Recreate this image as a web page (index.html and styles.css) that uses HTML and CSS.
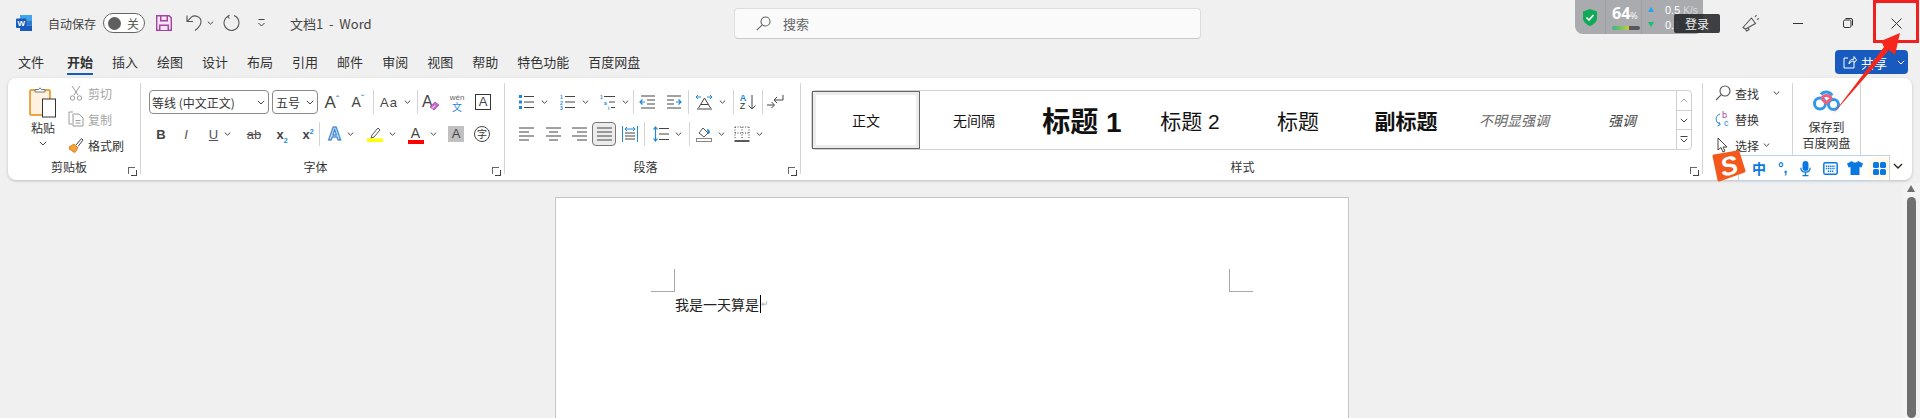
FILE: index.html
```html
<!DOCTYPE html>
<html lang="zh-CN">
<head>
  <meta charset="UTF-8">
  <title>文档1 - Word</title>
  <link rel="stylesheet" href="styles.css">
</head>
<body>
  <!-- title bar -->
  <header class="titlebar">
    <svg class="word-logo" width="16" height="16" viewBox="0 0 16 16">
      <rect x="4" y="0" width="12" height="5.4" fill="#41a5ee"/>
      <rect x="4" y="5.3" width="12" height="5.4" fill="#2b7cd3"/>
      <rect x="4" y="10.6" width="12" height="5.4" fill="#185abd"/>
      <rect x="0" y="3.5" width="10.5" height="9.5" rx="1" fill="#1a5bb8"/>
      <text x="5.2" y="11" class="word-w">W</text>
    </svg>
    <span class="autosave">自动保存</span>
    <div class="toggle"><i class="knob"></i><span>关</span></div>
    <svg class="save" width="16" height="16" viewBox="0 0 16 16">
      <path d="M.7.700h12.400l2.200 2.200v12.400H.7z" fill="#f4e6f4" stroke="#a544a5" stroke-width="1.400"/>
      <path d="M4 1h8v5.500H4zM3 9.500h10V15H3z" fill="#a544a5"/>
      <path d="M5.500 1.500h5v3.500h-5zM4.500 11h7v4h-7z" fill="#f4e6f4"/>
    </svg>
    <svg class="undo" width="16" height="18" viewBox="0 0 16 18" fill="none" stroke="#555" stroke-width="1.100">
      <path d="M1 1.500v6h6M1.200 7.300 5.600 2.900c3-2.200 9.400-.6 9.400 4.600 0 3.700-3 6.800-6 9"/>
    </svg>
    <svg class="chev undo-chev" width="7" height="4" viewBox="0 0 7 4"><path d="M.8.600 3.500 3.200 6.200.600"/></svg>
    <svg class="redo" width="17" height="18" viewBox="0 0 17 18" fill="none" stroke="#555" stroke-width="1.100">
      <path d="M11 1.500c3 1.200 5 4 5 7.500a7.500 7.500 0 1 1-11-6.700"/><path d="M6.500 1 4.800 2.500 6.500 4.500"/>
    </svg>
    <svg class="qat-more" width="9" height="8" viewBox="0 0 9 8" fill="none" stroke="#444"><path d="M1.500.5h6M1.500 4 4.500 7 7.500 4"/></svg>
    <span class="doc-title">文档1&nbsp; -&nbsp; Word</span>
    <div class="search">
      <svg width="15" height="15" viewBox="0 0 15 15" fill="none" stroke="#666" stroke-width="1.100"><circle cx="9.500" cy="5.500" r="4.500"/><path d="M6.200 8.800.8 14.200"/></svg>
      <span>搜索</span>
    </div>
    <div class="winctl">
      <svg class="megaphone" width="18" height="18" viewBox="0 0 18 18" fill="none" stroke="#555" stroke-width="1.100">
        <path d="M1 13.500 9.500 4l4 5.500-10 5.500zM3.500 15l1 2 2.500-1.200-.7-2.200M13 3l1.500-2M15 5.500l2-1"/>
      </svg>
      <i class="win-min"></i>
      <svg class="win-restore" width="10" height="10" viewBox="0 0 10 10" fill="none" stroke="#333"><rect x=".5" y="2" width="7.500" height="7.500" rx="1.500"/><path d="M2.500.5h5.500a1.500 1.500 0 0 1 1.500 1.500v5.500"/></svg>
      <svg class="win-close" width="11" height="11" viewBox="0 0 11 11" stroke="#333"><path d="M.5.500l10 10M10.500.500l-10 10"/></svg>
    </div>
  </header>

  <!-- tabs -->
  <nav class="tabs">
    <span>文件</span><span class="active">开始</span><span>插入</span><span>绘图</span><span>设计</span><span>布局</span><span>引用</span><span>邮件</span><span>审阅</span><span>视图</span><span>帮助</span><span>特色功能</span><span>百度网盘</span>
    <div class="share">
      <svg width="14" height="14" viewBox="0 0 14 14" fill="none" stroke="#fff"><path d="M5 3H1v10h10V8M6 9c0-3 2-5 5-5V1.500L13.500 5 11 8V6C9 6 7 7 6 9z"/></svg>
      <span>共享</span>
      <svg class="chev chev-white" width="8" height="5" viewBox="0 0 8 5"><path d="M.8.800 4 4 7.200.800"/></svg>
    </div>
  </nav>

  <!-- ribbon -->
  <section class="ribbon">
    <div class="group g-clip">
      <div class="group-body clip-body">
        <div class="paste">
          <svg width="28" height="31" viewBox="0 0 28 31">
            <rect x="1" y="3" width="20" height="25" rx="1" fill="#fdf2e0" stroke="#e8890c" stroke-width="1.500"/>
            <path d="M6 5V2.500h3.500L11 .8l1.500 1.700H16V5z" fill="#fff" stroke="#777"/>
            <rect x="13.500" y="12" width="13" height="18" fill="#fff" stroke="#333"/>
          </svg>
          <span>粘贴</span>
          <svg class="chev" width="8" height="5" viewBox="0 0 8 5"><path d="M.8.800 4 4 7.200.800"/></svg>
        </div>
        <div class="clip-list">
          <div class="clip-row off">
            <svg width="16" height="16" viewBox="0 0 14 16" fill="none" stroke="#9a9a9a"><path d="M3 1l6 9M11 1 5 10"/><circle cx="3.500" cy="13" r="2.200"/><circle cx="10.500" cy="13" r="2.200"/></svg>
            <span>剪切</span>
          </div>
          <div class="clip-row off">
            <svg width="16" height="16" viewBox="0 0 16 16" fill="none" stroke="#9a9a9a"><path d="M5 1H1v12h3"/><path d="M5 3h6l4 4v8H5zM7.500 9.500h5M7.500 12h5"/></svg>
            <span>复制</span>
          </div>
          <div class="clip-row">
            <svg width="16" height="16" viewBox="0 0 16 16"><path d="M1 10l5-3 4 4-3 4.500L4 14l-.5-1L2 13z" fill="#f6a33c" stroke="#d9730d" stroke-width=".8"/><path d="M8 8l5.500-6.500 1.500 1.500L10 9.500" fill="#fff" stroke="#444"/></svg>
            <span>格式刷</span>
          </div>
        </div>
      </div>
      <div class="group-label">剪贴板<i class="launcher"></i></div>
    </div>

    <div class="group g-font">
      <div class="group-body">
        <div class="row">
          <div class="combo combo-font"><span>等线 (中文正文)</span><svg class="chev" width="8" height="5" viewBox="0 0 8 5"><path d="M.8.800 4 4 7.200.800"/></svg></div>
          <div class="combo combo-size"><span>五号</span><svg class="chev" width="8" height="5" viewBox="0 0 8 5"><path d="M.8.800 4 4 7.200.800"/></svg></div>
          <div class="tool w26"><span class="glyph big-a">A<sup class="caret-blue">ˆ</sup></span></div>
          <div class="tool w26"><span class="glyph mid-a">A<sup class="caret-blue">ˇ</sup></span></div>
          <i class="sep s1"></i>
          <div class="tool w43"><span class="glyph aa">Aa</span><svg class="chev" width="7" height="4" viewBox="0 0 7 4"><path d="M.8.600 3.500 3.200 6.200.600"/></svg></div>
          <i class="sep"></i>
          <div class="tool w26">
            <svg width="18" height="18" viewBox="0 0 18 18"><text x="0" y="14" class="svg-a">A</text><path d="M8 14l5-5 4 3-5 5z" fill="#c86dd0" stroke="#9c3fa6" stroke-width=".7"/><path d="M10 15.500l3-3" stroke="#fff"/></svg>
          </div>
          <div class="tool w26 wen"><small>wén</small><b>文</b></div>
          <div class="tool w26"><span class="boxed-a">A</span></div>
        </div>
        <div class="row row-2">
          <div class="tool w24"><b class="fmt">B</b></div>
          <div class="tool w26"><i class="fmt thin">I</i></div>
          <div class="tool w42"><u class="fmt thin">U</u><svg class="chev" width="7" height="4" viewBox="0 0 7 4"><path d="M.8.600 3.500 3.200 6.200.600"/></svg></div>
          <div class="tool w26"><s class="fmt thin">ab</s></div>
          <div class="tool w30"><span class="fmt semi">x<sub class="blue-sub">2</sub></span></div>
          <div class="tool w22"><span class="fmt semi">x<sup class="blue-sup">2</sup></span></div>
          <i class="sep"></i>
          <div class="tool w36 ml3">
            <span class="effect-a">A</span><svg class="chev" width="7" height="4" viewBox="0 0 7 4"><path d="M.8.600 3.500 3.200 6.200.600"/></svg>
          </div>
          <div class="tool w45">
            <svg width="16" height="16" viewBox="0 0 16 16"><path d="M5 9l6-7 2 2-6 7-3 1z" fill="#fff" stroke="#555"/><rect x="0" y="12.500" width="16" height="3.500" fill="#ffff00"/></svg>
            <svg class="chev" width="7" height="4" viewBox="0 0 7 4"><path d="M.8.600 3.500 3.200 6.200.600"/></svg>
          </div>
          <div class="tool w36">
            <span class="color-a">A</span>
            <svg class="chev" width="7" height="4" viewBox="0 0 7 4"><path d="M.8.600 3.500 3.200 6.200.600"/></svg>
          </div>
          <div class="tool w26 ml3"><span class="shade-a">A</span></div>
          <div class="tool w26"><span class="circle-zi">字</span></div>
        </div>
      </div>
      <div class="group-label">字体<i class="launcher"></i></div>
    </div>

    <div class="group g-para">
      <div class="group-body">
        <div class="row">
          <div class="tool w41">
            <svg width="16" height="16" viewBox="0 0 16 16"><g fill="#1e88d9"><rect y="1" width="3" height="3"/><rect y="6.500" width="3" height="3"/><rect y="12" width="3" height="3"/></g><path d="M5 2.500h10M5 8h10M5 13.500h10" stroke="#444"/></svg>
            <svg class="chev" width="7" height="4" viewBox="0 0 7 4"><path d="M.8.600 3.500 3.200 6.200.600"/></svg>
          </div>
          <div class="tool w41">
            <svg width="16" height="16" viewBox="0 0 16 16"><g class="mini-blue"><text x="0" y="5">1</text><text x="0" y="10.500">2</text><text x="0" y="16">3</text></g><path d="M5 2.500h10M5 8h10M5 13.500h10" stroke="#444"/></svg>
            <svg class="chev" width="7" height="4" viewBox="0 0 7 4"><path d="M.8.600 3.500 3.200 6.200.600"/></svg>
          </div>
          <div class="tool w38">
            <svg width="16" height="16" viewBox="0 0 16 16"><g class="mini-blue"><text x="0" y="5">1</text><text x="4" y="10.500">a</text><text x="8" y="16">i</text></g><path d="M4 2.500h11M9 8h6M11 13.500h4" stroke="#444"/></svg>
            <svg class="chev" width="7" height="4" viewBox="0 0 7 4"><path d="M.8.600 3.500 3.200 6.200.600"/></svg>
          </div>
          <i class="sep"></i>
          <div class="tool w26">
            <svg width="15" height="14" viewBox="0 0 15 14"><path d="M1 1h14M7 5h8M7 9h8M1 13h14" stroke="#444"/><path d="M5 7H0M2.500 4.500 0 7l2.500 2.500" fill="none" stroke="#1e88d9" stroke-width="1.200"/></svg>
          </div>
          <div class="tool w28">
            <svg width="15" height="14" viewBox="0 0 15 14"><path d="M0 1h14M0 5h7M0 9h7M0 13h14" stroke="#444"/><path d="M9 7h5M11.500 4.500 14 7l-2.500 2.500" fill="none" stroke="#1e88d9" stroke-width="1.200"/></svg>
          </div>
          <i class="sep"></i>
          <div class="tool w44">
            <svg width="17" height="16" viewBox="0 0 17 16" fill="none"><path d="M2.500 14 8.500 4l6 10M5 10.500h7M1 15h15" stroke="#444"/><path d="M0 3h5M2 1 0 3l2 2M11 3h5M14 1l2 2-2 2" stroke="#1e88d9"/></svg>
            <svg class="chev" width="7" height="4" viewBox="0 0 7 4"><path d="M.8.600 3.500 3.200 6.200.600"/></svg>
          </div>
          <i class="sep"></i>
          <div class="tool w28 sort"><span class="az"><b>A</b><b>Z</b></span><svg width="8" height="16" viewBox="0 0 8 16" fill="none" stroke="#444"><path d="M4 1v14M.5 11.500 4 15l3.500-3.500"/></svg></div>
          <i class="sep"></i>
          <div class="tool w24">
            <svg width="17" height="16" viewBox="0 0 17 16" fill="none" stroke="#444"><path d="M16 1v5H7M10 3 7 6l3 3"/><path d="M0 11h7M4.500 8 7.500 11 4.500 14"/></svg>
          </div>
        </div>
        <div class="row row-2">
          <div class="tool w27"><svg width="15" height="14" viewBox="0 0 15 14"><path d="M0 1h15M0 5h10M0 9h15M0 13h10" stroke="#444"/></svg></div>
          <div class="tool w26"><svg width="15" height="14" viewBox="0 0 15 14"><path d="M0 1h15M3 5h9M0 9h15M3 13h9" stroke="#444"/></svg></div>
          <div class="tool w26"><svg width="15" height="14" viewBox="0 0 15 14"><path d="M0 1h15M5 5h10M0 9h15M5 13h10" stroke="#444"/></svg></div>
          <div class="tool w24 selected"><svg width="15" height="14" viewBox="0 0 15 14"><path d="M0 1h15M0 5h15M0 9h15M0 13h15" stroke="#444"/></svg></div>
          <div class="tool w28"><svg width="16" height="16" viewBox="0 0 16 16" fill="none"><path d="M3 7h10M3 10h10M3 13h10" stroke="#444"/><path d="M.5 0v16M15.500 0v16M3 3h10M5 1 3 3l2 2M11 1l2 2-2 2" stroke="#1e88d9"/></svg></div>
          <i class="sep"></i>
          <div class="tool w44">
            <svg width="16" height="16" viewBox="0 0 16 16" fill="none"><path d="M6 2.500h10M6 8h10M6 13.500h10" stroke="#444"/><path d="M2.500 1v14M.5 3.500l2-2.500 2 2.500M.5 12.500l2 2.500 2-2.500" stroke="#1e88d9" stroke-width="1.200"/></svg>
            <svg class="chev" width="7" height="4" viewBox="0 0 7 4"><path d="M.8.600 3.500 3.200 6.200.600"/></svg>
          </div>
          <i class="sep"></i>
          <div class="tool w41">
            <svg width="16" height="16" viewBox="0 0 16 16"><path d="M3 7l4-5 5 5-4 4z" fill="#fff" stroke="#555"/><path d="M11 3c2 0 3 2 3 4l-2 1" fill="#1e88d9"/><rect x=".5" y="12.500" width="15" height="3" fill="#fff" stroke="#888"/></svg>
            <svg class="chev" width="7" height="4" viewBox="0 0 7 4"><path d="M.8.600 3.500 3.200 6.200.600"/></svg>
          </div>
          <div class="tool w34">
            <svg width="16" height="16" viewBox="0 0 16 16" fill="none"><path d="M1 1h14M1 1v12M15 1v12M8 1v12M1 7h14" stroke="#444" stroke-dasharray="1 1.500"/><path d="M.5 15h15" stroke="#222" stroke-width="1.500"/></svg>
            <svg class="chev" width="7" height="4" viewBox="0 0 7 4"><path d="M.8.600 3.500 3.200 6.200.600"/></svg>
          </div>
        </div>
      </div>
      <div class="group-label">段落<i class="launcher"></i></div>
    </div>

    <div class="group g-styles">
      <div class="group-body gallery-wrap">
        <div class="gallery">
          <div class="style-item current"><span class="st-body">正文</span></div>
          <div class="style-item"><span class="st-body">无间隔</span></div>
          <div class="style-item"><span class="st-h1">标题 1</span></div>
          <div class="style-item"><span class="st-h2">标题 2</span></div>
          <div class="style-item"><span class="st-h2">标题</span></div>
          <div class="style-item"><span class="st-sub">副标题</span></div>
          <div class="style-item"><span class="st-em">不明显强调</span></div>
          <div class="style-item"><span class="st-em strong">强调</span></div>
          <div class="gallery-scroll">
            <div class="scroll-btn"><svg class="chev chev-off" width="8" height="5" viewBox="0 0 8 5"><path d="M.8 4.200 4 1l3.200 3.200"/></svg></div>
            <div class="scroll-btn"><svg class="chev" width="8" height="5" viewBox="0 0 8 5"><path d="M.8.800 4 4 7.200.800"/></svg></div>
            <div class="scroll-btn"><svg class="chev" width="8" height="7" viewBox="0 0 8 7"><path d="M.5.500h7M.8 2.800 4 6l3.200-3.200"/></svg></div>
          </div>
        </div>
      </div>
      <div class="group-label">样式<i class="launcher"></i></div>
    </div>

    <div class="group g-edit">
      <div class="edit-list">
        <div class="edit-row">
          <svg width="16" height="16" viewBox="0 0 16 16" fill="none" stroke="#555" stroke-width="1.100"><circle cx="10" cy="6" r="5"/><path d="M6.300 9.700 1 15"/></svg>
          <span>查找</span>
          <svg class="chev find-chev" width="7" height="4" viewBox="0 0 7 4"><path d="M.8.600 3.500 3.200 6.200.600"/></svg>
        </div>
        <div class="edit-row">
          <svg width="16" height="16" viewBox="0 0 16 16" fill="none"><text x="7" y="7" class="rep-b">b</text><text x="9" y="15" class="rep-c">c</text><path d="M5 3C1 4 .5 9 2 11l3 2.500M2.500 15l2.800-1.500L3.800 11" stroke="#1e88d9"/></svg>
          <span>替换</span>
        </div>
        <div class="edit-row">
          <svg width="16" height="16" viewBox="0 0 16 16"><path d="M3 1v12l3-2.500 2 4.500 2-1-2-4h4z" fill="#fff" stroke="#444"/></svg>
          <span>选择</span>
          <svg class="chev" width="7" height="4" viewBox="0 0 7 4"><path d="M.8.600 3.500 3.200 6.200.600"/></svg>
        </div>
      </div>
    </div>

    <div class="group g-baidu">
      <svg class="baidu-logo" width="28" height="22" viewBox="0 0 28 22" fill="none">
        <circle cx="7" cy="13.500" r="5.500" stroke="#2f9be8" stroke-width="3"/>
        <circle cx="20.500" cy="14.500" r="5" stroke="#2f9be8" stroke-width="3"/>
        <path d="M8 4.500a6.500 6.500 0 0 1 11 1" stroke="#2f9be8" stroke-width="3"/>
        <path d="M8.800 8.500a5.300 5.300 0 0 1 9.800.5M9 9l4 4 5-4" stroke="#f0607a" stroke-width="3"/>
      </svg>
      <span>保存到</span>
      <span>百度网盘</span>
    </div>
  </section>

  <!-- document area -->
  <main class="canvas">
    <div class="page">
      <div class="margin-marks"><i class="mark mark-l"></i><i class="mark mark-r"></i></div>
      <p class="doc-text">我是一天算是<i class="cursor"></i><span class="para-mark">↵</span></p>
    </div>
    <div class="vscroll"><i class="vs-up"></i><i class="vs-thumb"></i></div>
  </main>

  <!-- things floating over the window -->
  <div class="tray">
    <svg width="14" height="17" viewBox="0 0 14 17"><path d="M7 0l7 2.500V9c0 4-3.500 6.500-7 8-3.500-1.500-7-4-7-8V2.500z" fill="#0fa958"/><path d="M3.500 8.500 6 11l4.500-5" fill="none" stroke="#fff" stroke-width="1.600"/></svg>
    <div class="tray-pct">
      <div class="pct-num">64<small>%</small></div>
      <div class="pct-bar"></div>
    </div>
    <div class="tray-net">
      <div class="net-row"><i class="tri up"></i><span>0.5 <small>K/s</small></span></div>
      <div class="net-row"><i class="tri down"></i><span>0.1</span></div>
    </div>
  </div>
  <div class="login-tip">登录</div>

  <div class="ime">
    <svg class="ime-s" width="34" height="32" viewBox="0 0 34 32">
      <path d="M2 6 26 2l6 19-25 9z" fill="#f4581c" stroke="#f4581c" stroke-width="3" stroke-linejoin="round"/>
      <text x="17" y="25" class="ime-s-letter" transform="rotate(-14 17 16)">S</text>
    </svg>
    <span class="ime-zh">中</span>
    <span class="ime-punct">°,</span>
    <svg width="11" height="17" viewBox="0 0 13 18" fill="#0a78e0"><rect x="3" y="0" width="7" height="12" rx="3.500"/><path d="M1 8c0 7 11 7 11 0M6.500 13v4M3 17.500h7" fill="none" stroke="#0a78e0" stroke-width="1.500"/></svg>
    <svg width="15" height="13" viewBox="0 0 16 14"><rect x=".8" y=".8" width="14.400" height="12.400" rx="1.500" fill="#fff" stroke="#0a78e0" stroke-width="1.600"/><path d="M3 4.500h10M3 7h10M5 10h6" stroke="#0a78e0" stroke-width="1.500" stroke-dasharray="1.500 .8"/></svg>
    <svg class="ime-shirt" width="16" height="14" viewBox="0 0 16 14" fill="#0a78e0"><path d="M5 0 0 2.500l1.500 4L3.500 6v8h9V6l2 .5 1.500-4L11 0C10 2 6 2 5 0z"/></svg>
    <svg class="ime-grid" width="13" height="13" viewBox="0 0 13 13" fill="#0a78e0"><rect width="6" height="6" rx="1.500"/><rect x="7" width="6" height="6" rx="1.500"/><rect y="7" width="6" height="6" rx="1.500"/><rect x="7" y="7" width="6" height="6" rx="1.500"/></svg>
  </div>
  <svg class="ribbon-collapse" width="10" height="6" viewBox="0 0 10 6" fill="none" stroke="#222" stroke-width="1.300"><path d="M1 1l4 4 4-4"/></svg>

  <i class="red-box"></i>
  <svg class="red-arrow" width="72" height="86" viewBox="0 0 72 86">
    <path d="M3 84 54 17 51 11 70 3 65 25 59 20z" fill="#f5271d"/>
  </svg>
</body>
</html>
```

FILE: styles.css
```css
* {
  box-sizing: border-box;
}
html, body {
  margin: 0;
  height: 418px;
  overflow: hidden;
}
body {
  background: #f0f0f0;
  color: #333;
  font-family: "Noto Sans CJK SC", "Liberation Sans", sans-serif;
  font-size: 12px;
  position: relative;
}
svg {
  display: block;
  flex: none;
  overflow: visible;
}
.chev {
  fill: none;
  stroke: #444;
  stroke-width: 1;
}
.chev-white {
  stroke: #fff;
}
.chev-off {
  stroke: #aaa;
}

/* title bar */
.titlebar {
  height: 46px;
  display: flex;
  align-items: center;
  padding-left: 16px;
}
.word-w {
  font: bold 8px "Liberation Sans", sans-serif;
  fill: #fff;
  text-anchor: middle;
}
.autosave {
  margin-left: 16px;
  width: 48px;
  color: #444;
}
.toggle {
  margin-left: 7px;
  width: 42px;
  height: 20px;
  border: 1px solid #666;
  border-radius: 10px;
  background: #fff;
  display: flex;
  align-items: center;
  padding: 0 5px 0 4px;
  justify-content: space-between;
  color: #555;
}
.knob {
  width: 13px;
  height: 13px;
  border-radius: 50%;
  background: #5f5f5f;
}
.save {
  margin-left: 11px;
}
.undo {
  margin-left: 14px;
}
.undo-chev {
  margin-left: 5px;
}
.redo {
  margin-left: 9px;
}
.qat-more {
  margin-left: 17px;
}
.doc-title {
  margin-left: 24px;
  font-size: 13px;
  color: #444;
  width: 110px;
  white-space: nowrap;
}
.search {
  margin-left: 334px;
  width: 467px;
  height: 31px;
  background: #fafafa;
  border: 1px solid #dcdcdc;
  border-bottom-color: #c8c8c8;
  border-radius: 4px;
  display: flex;
  align-items: center;
  padding-left: 21px;
  color: #666;
  font-size: 13px;
}
.search span {
  margin-left: 12px;
}
.winctl {
  margin-left: auto;
  display: flex;
  align-items: center;
  height: 100%;
  padding-right: 18px;
}
.megaphone {
  margin-right: 33px;
}
.win-min {
  width: 10px;
  height: 1px;
  background: #333;
  margin-right: 40px;
}
.win-restore {
  margin-right: 38px;
}

/* tabs */
.tabs {
  height: 32px;
  display: flex;
  align-items: center;
  padding: 0 12px 0 18px;
  gap: 19px;
  font-size: 13px;
  color: #333;
}
.tabs > span {
  position: relative;
  line-height: 18px;
}
.tabs .active {
  font-weight: 700;
  margin-left: 4px;
}
.tabs .active::after {
  content: "";
  position: absolute;
  left: 0;
  right: 0;
  bottom: -4px;
  height: 2px;
  background: #185abd;
}
.share {
  margin-left: auto;
  width: 73px;
  height: 24px;
  background: #185abd;
  border-radius: 4px;
  color: #fff;
  display: flex;
  align-items: center;
  padding-left: 8px;
  font-size: 13px;
  gap: 4px;
}
.share .chev {
  margin-left: 6px;
}

/* ribbon */
.ribbon {
  margin: 0 8px;
  height: 102px;
  background: #fff;
  border-radius: 8px;
  box-shadow: 0 1px 3px rgba(0, 0, 0, .22);
  display: flex;
  padding-top: 5px;
}
.group {
  height: 91px;
  border-right: 1px solid #d4d4d4;
  display: flex;
  flex-direction: column;
}
.group-body {
  flex: 1;
  min-height: 0;
}
.group-label {
  height: 20px;
  line-height: 26px;
  text-align: center;
  position: relative;
  color: #333;
  padding-right: 22px;
}
.g-clip .group-label {
  padding-right: 10px;
}
.g-styles .group-label {
  padding-right: 18px;
}
.launcher {
  position: absolute;
  right: 5px;
  top: 13px;
  width: 7px;
  height: 7px;
  border: 1px solid #666;
  border-width: 1px 0 0 1px;
}
.launcher::after {
  content: "";
  position: absolute;
  right: -2px;
  bottom: -2px;
  width: 5px;
  height: 5px;
  border: solid #444;
  border-width: 0 1px 1px 0;
}
.g-clip {
  width: 133px;
}
.g-font {
  width: 364px;
  padding-left: 8px;
}
.g-para {
  width: 296px;
  padding-left: 8px;
}
.g-styles {
  width: 902px;
}
.g-edit {
  width: 90px;
}
.g-baidu {
  width: 68px;
  display: flex;
  flex-direction: column;
  align-items: center;
  padding-top: 7px;
  line-height: 16px;
  color: #333;
}
.baidu-logo {
  margin-bottom: 7px;
}

/* clipboard */
.clip-body {
  display: flex;
}
.paste {
  width: 60px;
  display: flex;
  flex-direction: column;
  align-items: center;
  padding: 4px 0 0 10px;
  font-size: 12px;
}
.paste span {
  margin-top: 1px;
  line-height: 18px;
}
.paste .chev {
  margin-top: 4px;
}
.clip-list {
  display: flex;
  flex-direction: column;
  margin-top: -3px;
}
.clip-row {
  height: 26px;
  flex: none;
  display: flex;
  align-items: center;
  gap: 4px;
}
.clip-row.off {
  color: #a6a6a6;
}

/* tool rows */
.row {
  display: flex;
  align-items: center;
  height: 24px;
  margin-top: 7px;
}
.row-2 {
  margin-top: 8px;
}
.tool {
  height: 24px;
  display: flex;
  align-items: center;
  justify-content: center;
  gap: 6px;
  flex: none;
}
.w22 { width: 22px; }
.w24 { width: 24px; }
.w26 { width: 26px; }
.w27 { width: 27px; }
.w28 { width: 28px; }
.w30 { width: 30px; }
.w34 { width: 34px; }
.w36 { width: 36px; }
.w38 { width: 38px; }
.w41 { width: 41px; }
.w42 { width: 42px; }
.w43 { width: 43px; }
.w44 { width: 44px; }
.w45 { width: 45px; }
.ml3 { margin-left: 3px; }
.sep {
  width: 1px;
  height: 24px;
  background: #d4d4d4;
  flex: none;
}
.s1 {
  margin-left: 2px;
}
.selected {
  background: #ececec;
  border: 1px solid #777;
  border-radius: 4px;
}
.combo {
  height: 24px;
  border: 1px solid #8a8a8a;
  border-radius: 4px;
  display: flex;
  align-items: center;
  justify-content: space-between;
  padding: 0 3px 0 2px;
  color: #333;
  flex: none;
}
.combo-font {
  width: 120px;
  margin-right: 3px;
}
.combo-size {
  width: 46px;
  margin-right: 1px;
  padding-left: 3px;
}
.glyph, .fmt {
  font-family: "Liberation Sans", sans-serif;
  color: #444;
  line-height: 1;
}
.big-a {
  font-size: 17px;
}
.mid-a {
  font-size: 14px;
}
.caret-blue {
  color: #1e88d9;
  font-size: 11px;
  vertical-align: 4px;
  line-height: 0;
}
.aa {
  font-size: 13px;
  letter-spacing: 1px;
}
.svg-a {
  font: 16px "Liberation Sans", sans-serif;
  fill: #444;
}
.wen {
  flex-direction: column;
  gap: 0;
  line-height: 9px;
}
.wen small {
  font: 8px "Liberation Sans", sans-serif;
  color: #666;
}
.wen b {
  font-weight: 400;
  font-size: 10px;
  color: #1e88d9;
}
.boxed-a {
  width: 16px;
  height: 16px;
  border: 1px solid #333;
  text-align: center;
  font: 13px/14px "Liberation Sans", sans-serif;
  color: #444;
}
.fmt {
  font-size: 13px;
}
.thin {
  color: #555;
}
b.fmt, .semi {
  font-weight: 700;
}
.blue-sub, .blue-sup {
  font-size: 7px;
  color: #1e88d9;
  line-height: 0;
}
.effect-a {
  font: bold 18px/1 "Liberation Sans", sans-serif;
  color: #cfe6f8;
  -webkit-text-stroke: 1px #1e78c8;
}
.color-a {
  font: 14px/13px "Liberation Sans", sans-serif;
  color: #444;
  border-bottom: 4px solid #ff0000;
  width: 16px;
  text-align: center;
  margin-top: 2px;
}
.shade-a {
  width: 16px;
  height: 16px;
  background: #c0c0c0;
  text-align: center;
  font: 13px/16px "Liberation Sans", sans-serif;
  color: #444;
}
.circle-zi {
  width: 16px;
  height: 16px;
  border: 1px solid #444;
  border-radius: 50%;
  font-size: 10px;
  line-height: 13px;
  text-align: center;
}
.mini-blue text {
  font: bold 5px "Liberation Sans", sans-serif;
  fill: #1e88d9;
}
.sort {
  gap: 2px;
}
.az {
  display: flex;
  flex-direction: column;
  font: 9px/8px "Liberation Sans", sans-serif;
}
.az b {
  font-weight: 400;
}
.az b:first-child {
  color: #1e88d9;
  font-weight: 700;
}

/* styles gallery */
.gallery-wrap {
  padding: 7px 0 0 10px;
}
.gallery {
  width: 881px;
  height: 60px;
  border: 1px solid #d0d0d0;
  border-radius: 4px;
  display: flex;
}
.style-item {
  width: 108px;
  flex: none;
  display: flex;
  align-items: center;
  justify-content: center;
  color: #111;
  white-space: nowrap;
}
.style-item.current {
  border: 1px solid #666;
  box-shadow: inset 0 0 0 3px #ececec;
}
.st-body {
  font-size: 14px;
}
.st-h1 {
  font-size: 28px;
  font-weight: 700;
  font-family: "Liberation Sans", "Noto Sans CJK SC", sans-serif;
}
.st-h2 {
  font-size: 21px;
  font-family: "Liberation Sans", "Noto Sans CJK SC", sans-serif;
}
.st-sub {
  font-size: 21px;
  font-weight: 700;
}
.st-em {
  font-size: 14px;
  font-style: italic;
  color: #666;
}
.st-em.strong {
  color: #444;
}
.gallery-scroll {
  margin-left: auto;
  width: 15px;
  border-left: 1px solid #d0d0d0;
  display: flex;
  flex-direction: column;
}
.scroll-btn {
  flex: 1;
  display: flex;
  align-items: center;
  justify-content: center;
  border-bottom: 1px solid #d0d0d0;
}
.scroll-btn:last-child {
  border-bottom: 0;
}

/* editing */
.edit-list {
  margin-top: -3px;
  padding-left: 12px;
}
.edit-row {
  height: 26px;
  display: flex;
  align-items: center;
  gap: 4px;
}
.find-chev {
  margin-left: 10px;
}
.rep-b {
  font: 9px "Liberation Sans", sans-serif;
  fill: #a544a5;
}
.rep-c {
  font: 9px "Liberation Sans", sans-serif;
  fill: #1e88d9;
}

/* document */
.canvas {
  height: 238px;
  padding: 17px 0 0 555px;
}
.page {
  width: 794px;
  height: 221px;
  background: #fff;
  border: 1px solid #c6c6c6;
  border-bottom: 0;
  padding: 0 95px;
}
.margin-marks {
  height: 94px;
  position: relative;
}
.mark {
  position: absolute;
  top: 71px;
  width: 24px;
  height: 23px;
  border-bottom: 1px solid #a8a8a8;
}
.mark-l {
  left: 0;
  border-right: 1px solid #a8a8a8;
}
.mark-r {
  right: 0;
  border-left: 1px solid #a8a8a8;
}
.doc-text {
  margin: 2px 0 0;
  padding-left: 24px;
  font-size: 14px;
  line-height: 20px;
  color: #222;
  display: flex;
  align-items: center;
}
.cursor {
  width: 1px;
  height: 18px;
  background: #000;
  margin: 0 0 0 1px;
}
.para-mark {
  font-size: 9px;
  color: #aaa;
  line-height: 12px;
}
.vscroll {
  position: absolute;
  top: 183px;
  left: 1903px;
  width: 17px;
  height: 235px;
  padding: 2px 4px 0;
  background: #f3f3f3;
  border-radius: 8px 0 0 0;
}
.vs-up {
  display: block;
  width: 0;
  border: solid transparent;
  border-width: 0 4.500px 7px;
  border-bottom-color: #6f6f6f;
  margin-bottom: 5px;
}
.vs-thumb {
  display: block;
  height: 221px;
  background: #6f6f6f;
  border-radius: 5px;
}

/* overlays */
.tray {
  position: absolute;
  left: 1575px;
  top: 0;
  width: 128px;
  height: 34px;
  background: #a9abaf;
  border-radius: 0 0 8px 8px;
  display: flex;
  align-items: center;
  padding-left: 8px;
  color: #fff;
  font-family: "Liberation Sans", sans-serif;
}
.tray-pct {
  margin-left: 8px;
  padding-left: 6px;
  width: 40px;
  height: 100%;
  border-left: 1px solid #9ea0a4;
  border-right: 1px solid #9ea0a4;
}
.pct-num {
  font: bold 16px/20px "Open Sans", sans-serif;
  margin-top: 3px;
}
.pct-num small {
  font-size: 9px;
  font-weight: 400;
}
.pct-bar {
  width: 28px;
  height: 4px;
  border-radius: 2px;
  background: linear-gradient(90deg, #38b48c 0, #a5c850 50%, #e0c020 60%, #55585e 62%);
}
.tray-net {
  padding-left: 6px;
  font-size: 11px;
}
.net-row {
  height: 15px;
  display: flex;
  align-items: center;
  gap: 11px;
  width: 55px;
}
.net-row small {
  font-size: 10px;
  color: #d6d6d6;
}
.tri {
  width: 0;
  border: solid transparent;
  border-width: 0 3px 5px;
  flex: none;
}
.tri.up {
  border-bottom-color: #25a4f0;
}
.tri.down {
  border-width: 5px 3px 0;
  border-top-color: #11c46a;
}
.login-tip {
  position: absolute;
  left: 1674px;
  top: 14px;
  width: 46px;
  height: 19px;
  background: rgba(30, 32, 36, .85);
  border-radius: 2px;
  color: #eee;
  text-align: center;
  line-height: 19px;
  font-size: 12px;
}
.ime {
  position: absolute;
  left: 1738px;
  top: 155px;
  width: 152px;
  height: 26px;
  background: #fff;
  border: 1px solid #b9d3ee;
  display: flex;
  align-items: center;
  gap: 12px;
  padding-left: 13px;
}
.ime-s {
  position: absolute;
  left: -27px;
  top: -6px;
}
.ime-s-letter {
  font: italic bold 26px "Liberation Sans", sans-serif;
  fill: #fff;
  text-anchor: middle;
}
.ime-zh {
  font-size: 14px;
  font-weight: 700;
  color: #0a78e0;
}
.ime-punct {
  font: bold 14px/1 "Liberation Sans", sans-serif;
  color: #0a78e0;
}
.ime-shirt {
  margin-left: -3px;
}
.ime-grid {
  margin-left: -2px;
  box-shadow: 0 0 6px 3px rgba(250, 238, 190, .6);
}
.ribbon-collapse {
  position: absolute;
  left: 1893px;
  top: 163px;
}
.red-box {
  position: absolute;
  left: 1873px;
  top: 0;
  width: 46px;
  height: 43px;
  border: 3px solid #f02020;
}
.red-arrow {
  position: absolute;
  left: 1830px;
  top: 30px;
}
```
